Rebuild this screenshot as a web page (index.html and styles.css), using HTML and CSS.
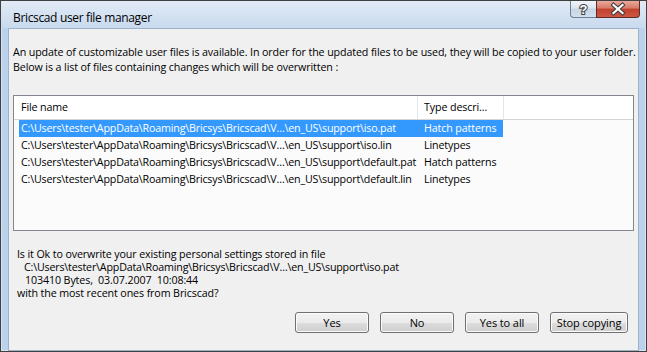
FILE: index.html
```html
<!DOCTYPE html>
<html lang="en">
<head>
    <meta charset="UTF-8">
    <title>Bricscad user file manager</title>
    <link rel="stylesheet" href="styles.css">
</head>
<body>

    <div class="window">
        <div class="titlebar">
            <span class="title">Bricscad user file manager</span>
            <div class="caption-btns">
                <span class="cap-btn help">
                    <svg width="25" height="16" viewBox="0 0 25 16">
                        <text x="12.5" y="13" text-anchor="middle" class="help-glyph">?</text>
                    </svg>
                </span>
                <span class="cap-btn close">
                    <svg width="42" height="16" viewBox="0 0 42 16">
                        <path d="M16.5 4 L25.5 12 M25.5 4 L16.5 12" stroke="#3d3d3d" stroke-width="4.2" stroke-linecap="square"/>
                        <path d="M16.5 4 L25.5 12 M25.5 4 L16.5 12" stroke="#fff" stroke-width="2.2" stroke-linecap="square"/>
                    </svg>
                </span>
            </div>
        </div>

        <div class="client">
            <p class="intro">An update of customizable user files is available. In order for the updated files to be used, they will be copied to your user folder.<br>Below is a list of files containing changes which will be overwritten :</p>

            <div class="listview">
                <div class="lv-header">
                    <span class="hd-name">File name</span>
                    <span class="hd-type">Type descri…</span>
                </div>
                <div class="lv-body">
                    <div class="lv-row selected">
                        <span class="c-name">C:\Users\tester\AppData\Roaming\Bricsys\Bricscad\V…\en_US\support\iso.pat</span>
                        <span class="c-type">Hatch patterns</span>
                    </div>
                    <div class="lv-row">
                        <span class="c-name">C:\Users\tester\AppData\Roaming\Bricsys\Bricscad\V…\en_US\support\iso.lin</span>
                        <span class="c-type">Linetypes</span>
                    </div>
                    <div class="lv-row">
                        <span class="c-name">C:\Users\tester\AppData\Roaming\Bricsys\Bricscad\V…\en_US\support\default.pat</span>
                        <span class="c-type">Hatch patterns</span>
                    </div>
                    <div class="lv-row">
                        <span class="c-name">C:\Users\tester\AppData\Roaming\Bricsys\Bricscad\V…\en_US\support\default.lin</span>
                        <span class="c-type">Linetypes</span>
                    </div>
                </div>
            </div>

            <div class="question">
                <div>Is it Ok to overwrite your existing personal settings stored in file</div>
                <div class="q-path">C:\Users\tester\AppData\Roaming\Bricsys\Bricscad\V…\en_US\support\iso.pat</div>
                <div class="q-info">103410 Bytes,  03.07.2007  10:08:44</div>
                <div>with the most recent ones from Bricscad?</div>
            </div>

            <div class="buttons">
                <button class="btn">Yes</button>
                <button class="btn">No</button>
                <button class="btn">Yes to all</button>
                <button class="btn btn-wide">Stop copying</button>
            </div>
        </div>
    </div>

</body>
</html>
```

FILE: styles.css
```css
/* fenêtre style Windows 7 basic */
body { margin: 0; background: #fff; font-family: "Open Sans", "Noto Sans", sans-serif; font-size: 10.7px; letter-spacing: -0.12px; color: #000; }
.window { width: 647px; height: 352px; box-sizing: border-box; border: 1px solid #404040; background-color: #bad2eb; display: flex; flex-direction: column; box-shadow: inset 0 0 0 1px #d6e4f3; }
.titlebar { height: 27px; display: flex; align-items: flex-start; background: linear-gradient(to bottom, #e2ebf6, #c8daee); }
.title { padding: 9px 0 0 12px; font-size: 12px; letter-spacing: -0.35px; line-height: 16px; }
.caption-btns { margin-left: auto; margin-right: 6px; display: flex; }
.cap-btn { display: block; height: 16px; box-sizing: content-box; }
.cap-btn svg { display: block; }
.help { width: 25px; border: 1px solid #6f8094; border-top: none; border-right: none; border-radius: 0 0 0 4px; background: linear-gradient(to bottom, #f1f5fa 0%, #dbe5f0 45%, #c6d5e7 50%, #d3dfec 100%); }
.help-glyph { font-family: "Liberation Sans", sans-serif; font-weight: bold; font-size: 13px; fill: #fff; stroke: #3d3d3d; stroke-width: 2px; paint-order: stroke; letter-spacing: 0; }
.close { width: 42px; border: 1px solid #5f2a24; border-top: none; border-radius: 0 0 4px 0; background: linear-gradient(to bottom, #e9a99c 0%, #d67a68 45%, #c2412c 50%, #cc5843 100%); }
.client { flex: 1; margin: 0 7px; border: 1px solid #9db2c9; background-color: #f0f0f0; display: flex; flex-direction: column; }
.intro { margin: 0; padding: 16px 0 0 4px; line-height: 15px; white-space: nowrap; }
.listview { margin: 20px 0 0 4px; width: 621px; height: 136px; box-sizing: border-box; border: 1px solid #828790; background-color: #fbfbfb; }
.lv-header { display: flex; height: 23px; line-height: 23px; border-bottom: 1px solid #d5d5d5; background: #fff; }
.lv-header span { box-sizing: border-box; border-right: 1px solid #e3e6ea; white-space: nowrap; }
.hd-name { width: 404px; padding-left: 7px; }
.hd-type { width: 86px; padding-left: 6px; }
.lv-row { display: flex; margin-left: 5px; width: 484px; height: 17px; line-height: 17px; }
.lv-row span { box-sizing: border-box; white-space: nowrap; overflow: hidden; }
.c-name { width: 398px; padding-left: 2px; letter-spacing: -0.18px; }
.c-type { padding-left: 7px; }
.lv-row.selected { background-color: #3399ff; color: #fff; }
.question { margin: 17px 0 0 8px; line-height: 13px; }
.q-path { padding-left: 7px; letter-spacing: -0.18px; }
.q-info { padding-left: 8px; white-space: pre; }
.buttons { margin-top: 12px; padding-right: 10px; display: flex; justify-content: flex-end; gap: 11px; }
.btn { width: 74px; height: 21px; padding: 0; font-family: inherit; font-size: 11px; letter-spacing: -0.1px; color: #000; border: 1px solid #707070; border-radius: 3px; background: linear-gradient(to bottom, #f2f2f2 0%, #ebebeb 50%, #dddddd 50%, #cfcfcf 100%); box-shadow: inset 0 0 0 1px #fbfbfb; }
.btn-wide { width: 78px; }
```
